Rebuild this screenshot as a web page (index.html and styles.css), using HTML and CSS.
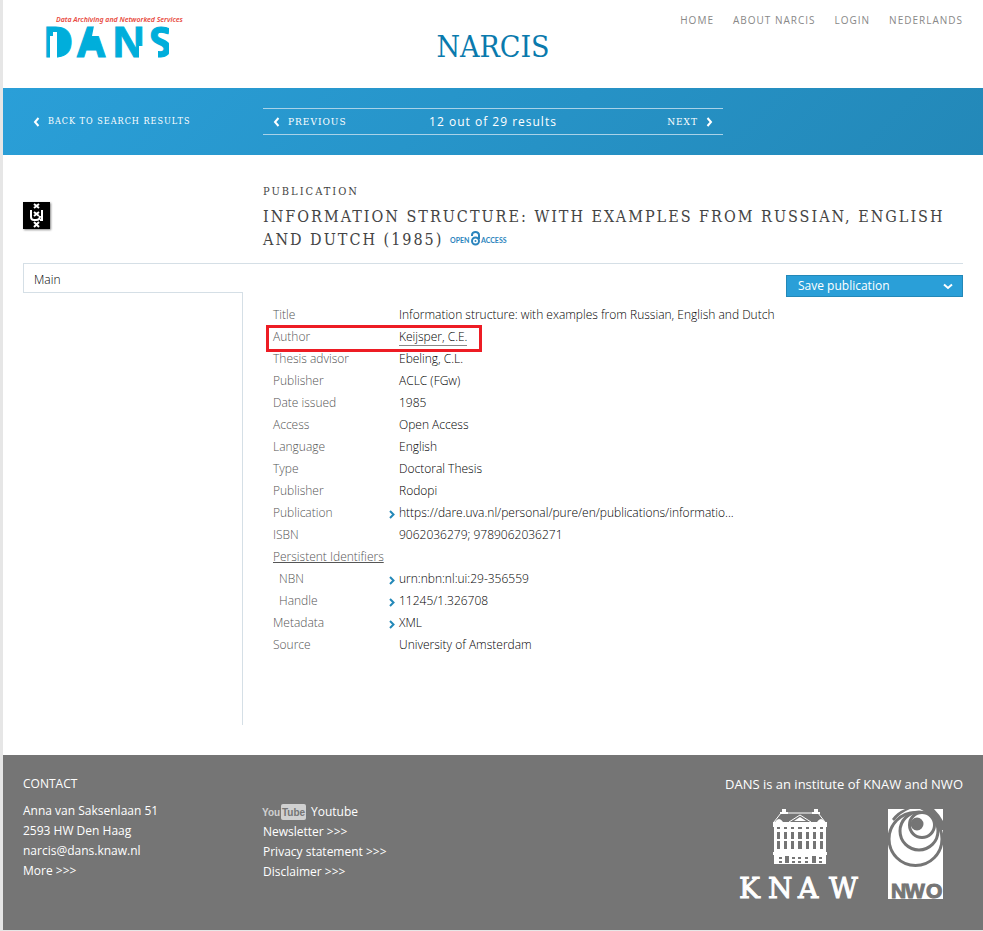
FILE: index.html
```html
<!DOCTYPE html>
<html lang="en">
<head>
<meta charset="utf-8">
<meta name="viewport" content="width=device-width, initial-scale=1">
<title>NARCIS</title>
<link rel="stylesheet" href="styles.css">
</head>
<body>
<header class="site-header">
  <a class="dans" href="#" aria-label="DANS">
    <svg width="146" height="60" viewBox="0 0 146 60">
      <text class="dans-word" x="-2 32 67 104" y="45">DANS</text>
      <path class="dans-fill" d="M8 20H18L22 24V36L18 40H8ZM44 22H48L52 37H41Z"/>
      <path class="dans-cut" d="M5 46V24H8V20H12V46ZM49 14L47 24H58V14ZM94 34H101V47H94ZM103 33H113V47H103ZM124 12H131V48H124Z"/>
      <text class="dans-tagline" x="11" y="10">Data Archiving and Networked Services</text>
    </svg>
  </a>
  <a class="brand" href="#">NARCIS</a>
  <nav class="top-nav">
    <a href="#">HOME</a>
    <a href="#">ABOUT NARCIS</a>
    <a href="#">LOGIN</a>
    <a href="#">NEDERLANDS</a>
  </nav>
</header>

<div class="band">
  <a class="back" href="#"><svg class="chev" width="7" height="10" viewBox="0 0 7 10"><path d="M5.500 1L2 5L5.500 9"/></svg>BACK TO SEARCH RESULTS</a>
  <nav class="pager">
    <a href="#"><svg class="chev" width="7" height="10" viewBox="0 0 7 10"><path d="M5.500 1L2 5L5.500 9"/></svg>PREVIOUS</a>
    <span class="count">12 out of 29 results</span>
    <a class="next" href="#">NEXT<svg class="chev" width="7" height="10" viewBox="0 0 7 10"><path d="M1.500 1L5 5L1.500 9"/></svg></a>
  </nav>
</div>

<main>
  <section class="heading">
    <svg class="uva" width="27" height="27" viewBox="0 0 27 27">
      <rect width="27" height="27"/>
      <path d="M11 2L16 6M16 2L11 6M11 10L16 14M16 10L11 14M11 20L16 25M16 20L11 25"/>
      <path d="M8 8V15Q8 18 11 18H13Q17 18 17 14M19 8V18H17"/>
    </svg>
    <div>
      <p class="kind">PUBLICATION</p>
      <h1>INFORMATION STRUCTURE: WITH EXAMPLES FROM RUSSIAN, ENGLISH AND DUTCH (1985)
        <svg class="oa" width="58" height="16" viewBox="0 0 58 16">
          <text x="0" y="12">OPEN</text>
          <text x="31" y="12">ACCESS</text>
          <path d="M22 5V4A3.500 3 0 0 1 29 4V8"/><circle cx="25.500" cy="10" r="3.500"/><circle class="dot" cx="25.500" cy="10" r="1"/>
        </svg>
      </h1>
    </div>
  </section>

  <div class="columns">
    <aside class="side">
      <a class="tab" href="#">Main</a>
      <div class="rail"></div>
    </aside>
    <section class="record">
      <button class="save" type="button" aria-haspopup="menu">Save publication
        <svg width="10" height="7" viewBox="0 0 10 7"><path d="M1 1.500L5 5L9 1.500"/></svg>
      </button>
      <table>
        <tr><th scope="row">Title</th><td>Information structure: with examples from Russian, English and Dutch</td></tr>
        <tr class="marked"><th scope="row">Author</th><td><a class="person" href="#">Keijsper, C.E.</a></td></tr>
        <tr><th scope="row">Thesis advisor</th><td>Ebeling, C.L.</td></tr>
        <tr><th scope="row">Publisher</th><td>ACLC (FGw)</td></tr>
        <tr><th scope="row">Date issued</th><td>1985</td></tr>
        <tr><th scope="row">Access</th><td>Open Access</td></tr>
        <tr><th scope="row">Language</th><td>English</td></tr>
        <tr><th scope="row">Type</th><td>Doctoral Thesis</td></tr>
        <tr><th scope="row">Publisher</th><td>Rodopi</td></tr>
        <tr><th scope="row">Publication</th><td><a class="ext" href="#"><svg width="6" height="9" viewBox="0 0 6 9"><path d="M1 1L4.500 4.500L1 8"/></svg>https://dare.uva.nl/personal/pure/en/publications/informatio...</a></td></tr>
        <tr><th scope="row">ISBN</th><td>9062036279; 9789062036271</td></tr>
        <tr><th scope="row"><span class="group">Persistent Identifiers</span></th><td></td></tr>
        <tr><th class="sub" scope="row">NBN</th><td><a class="ext" href="#"><svg width="6" height="9" viewBox="0 0 6 9"><path d="M1 1L4.500 4.500L1 8"/></svg>urn:nbn:nl:ui:29-356559</a></td></tr>
        <tr><th class="sub" scope="row">Handle</th><td><a class="ext" href="#"><svg width="6" height="9" viewBox="0 0 6 9"><path d="M1 1L4.500 4.500L1 8"/></svg>11245/1.326708</a></td></tr>
        <tr><th scope="row">Metadata</th><td><a class="ext" href="#"><svg width="6" height="9" viewBox="0 0 6 9"><path d="M1 1L4.500 4.500L1 8"/></svg>XML</a></td></tr>
        <tr><th scope="row">Source</th><td>University of Amsterdam</td></tr>
      </table>
    </section>
  </div>
</main>

<footer>
  <div>
    <h2>CONTACT</h2>
    <ul>
      <li>Anna van Saksenlaan 51</li>
      <li>2593 HW Den Haag</li>
      <li><a href="#">narcis@dans.knaw.nl</a></li>
      <li><a href="#">More &gt;&gt;&gt;</a></li>
    </ul>
  </div>
  <ul class="links">
    <li><a class="yt" href="#"><svg width="43" height="18" viewBox="0 0 43 18"><rect x="18" y="1" width="25" height="16" rx="2"/><text x="-1" y="13">You</text><text class="tube" x="19" y="13">Tube</text></svg>Youtube</a></li>
    <li><a href="#">Newsletter &gt;&gt;&gt;</a></li>
    <li><a href="#">Privacy statement &gt;&gt;&gt;</a></li>
    <li><a href="#">Disclaimer &gt;&gt;&gt;</a></li>
  </ul>
  <div class="institute">
    <p>DANS is an institute of KNAW and NWO</p>
    <div class="logos">
      <a href="#" aria-label="KNAW">
        <svg width="122" height="91" viewBox="0 0 122 91">
          <g class="house">
            <path d="M35 13L42 4H79L86 13" class="line"/>
            <path d="M43 0H47V3H49V5H41V3H43ZM75 0H79V3H81V5H73V3H75Z"/>
            <path d="M50 13L61 6L72 13" class="line"/>
            <path d="M55 12L61 8L67 12ZM36 13Q40 7 44 13ZM78 13Q82 7 86 13Z"/>
            <path d="M34 13H88V18H34ZM34 43H88V46H34ZM35 46H87V55H35Z"/>
            <path d="M35 18H38V43H35ZM41 18H45V43H41ZM48 18H52V43H48ZM55 18H59V43H55ZM63 18H67V43H63ZM70 18H74V43H70ZM77 18H81V43H77ZM84 18H87V43H84Z"/>
            <path d="M36 20H86V23H36ZM36 30H86V32H36ZM36 40H86V43H36Z"/>
          </g>
          <path class="holes" d="M40 48H43V50H40ZM40 52H43V54H40ZM46 47H50V54H46ZM53 48H56V50H53ZM53 52H56V54H53ZM59 48H62V50H59ZM59 52H62V54H59ZM66 48H69V50H66ZM66 52H69V54H66ZM73 47H77V54H73ZM80 48H83V50H80ZM80 52H83V54H80Z"/>
          <text class="knaw" x="0 29 59 90" y="89">KNAW</text>
        </svg>
      </a>
      <a class="nwo-logo" href="#" aria-label="NWO">
        <svg width="55" height="90" viewBox="0 0 55 90">
          <defs><clipPath id="frame"><rect width="55" height="70"/></clipPath></defs>
          <rect class="white" width="55" height="90"/>
          <g class="rings" clip-path="url(#frame)">
            <circle cx="27.500" cy="30" r="26.500"/>
            <path class="holes" d="M4 10Q9 3 17 0H22Q12 4 6 12ZM32 0H46Q52 6 55 12V21H49Q48 8 32 0Z"/>
            <circle cx="31" cy="22" r="19"/>
            <circle cx="34" cy="16" r="12.500"/>
            <circle class="holes" cx="29" cy="15" r="5"/>
          </g>
          <text class="nwo" x="3 17 38" y="89">NWO</text>
        </svg>
      </a>
    </div>
  </div>
</footer>
</body>
</html>
```
FILE: styles.css
```css
* {
  box-sizing: border-box;
}

body {
  margin: 0;
  border-left: 3px solid #e6e6e6;
  border-bottom: 1px solid #e6e6e6;
  background: #fff;
  color: #000;
  font: 300 12px/22px "Open Sans", sans-serif;
}

a {
  color: inherit;
  text-decoration: none;
}

svg {
  overflow: visible;
}

h1, h2, p, ul {
  margin: 0;
  padding: 0;
  font-weight: inherit;
}

ul {
  list-style: none;
}

.site-header {
  display: grid;
  grid-template-columns: 1fr auto 1fr;
  align-items: start;
  height: 88px;
  padding: 12px 20px 0;
}

.dans {
  padding-left: 22px;
}

.dans svg {
  display: block;
}

.dans-tagline {
  fill: #e8483c;
  font: italic 600 7px "Noto Sans", sans-serif;
}

.dans-word,
.dans-fill {
  fill: #00aedb;
}

.dans-word {
  stroke: #00aedb;
  stroke-width: 1;
  font: 700 41px "Open Sans", sans-serif;
}

.dans-cut {
  fill: #fff;
}

.brand {
  padding-top: 15px;
  color: #0a7aad;
  font: 30px/40px "DejaVu Serif Condensed", "DejaVu Serif", serif;
}

.top-nav {
  display: flex;
  justify-content: flex-end;
  gap: 19px;
  color: #888;
  font-size: 10px;
  font-weight: 400;
  line-height: 16px;
  letter-spacing: 1px;
  white-space: nowrap;
}

.band {
  display: grid;
  grid-template-columns: 220px minmax(0, 460px);
  gap: 20px;
  align-items: center;
  padding: 20px;
  background: linear-gradient(135deg, #2a9fd8, #2388b8);
  color: #fff;
  font: 10px/25px "DejaVu Serif Condensed", "DejaVu Serif", serif;
  letter-spacing: 1px;
}

.band a {
  display: flex;
  align-items: center;
  gap: 8px;
}

.back {
  padding-left: 10px;
  font-size: 9px;
}

.pager {
  display: grid;
  grid-template-columns: 1fr auto 1fr;
  padding: 0 10px;
  border: solid #a9d2e8;
  border-width: 1px 0;
}

.next {
  justify-content: flex-end;
}

.count {
  font: 12px/25px "Open Sans", sans-serif;
}

.chev path {
  fill: none;
  stroke: #fff;
  stroke-width: 2;
}

main {
  padding: 0 20px 30px;
}

.heading {
  display: grid;
  grid-template-columns: 220px 1fr;
  gap: 20px;
  min-height: 109px;
  padding: 26px 0 10px;
  border-bottom: 1px solid #d5dfe6;
}

.uva {
  margin-top: 21px;
  box-shadow: 1px 1px 2px #888;
}

.uva path {
  fill: none;
  stroke: #fff;
  stroke-width: 2;
}

.kind,
h1 {
  color: #444;
  font-family: "DejaVu Serif Condensed", "DejaVu Serif", serif;
  font-weight: 400;
}

.kind {
  margin-bottom: 2px;
  font-size: 11px;
  letter-spacing: 2px;
}

h1 {
  font-size: 16px;
  line-height: 23px;
  letter-spacing: 2px;
}

.oa {
  height: 16px;
  vertical-align: -2px;
  letter-spacing: 0;
}

.oa text {
  fill: #2b84bd;
  font: 700 7px Lato, sans-serif;
}

.oa path,
.oa circle {
  fill: none;
  stroke: #2b84bd;
  stroke-width: 2;
}

.oa .dot {
  fill: #2b84bd;
  stroke: none;
}

.columns {
  display: grid;
  grid-template-columns: 220px 1fr;
  gap: 20px;
}

.side {
  display: flex;
  flex-direction: column;
}

.tab {
  padding: 5px 10px 1px;
  border: solid #d5dfe6;
  border-width: 0 0 1px 1px;
}

.rail {
  flex: 1;
  border-right: 1px solid #d5dfe6;
}

.record {
  display: flex;
  flex-direction: column;
  align-items: flex-start;
  gap: 7px;
  padding: 11px 0 69px;
}

.save {
  display: flex;
  justify-content: space-between;
  align-items: center;
  align-self: flex-end;
  width: 177px;
  height: 22px;
  padding: 0 9px 0 11px;
  border: 1px solid #2388b8;
  background: #2a9fd8;
  color: #fff;
  font: inherit;
  font-weight: 400;
}

.save path {
  fill: none;
  stroke: #fff;
  stroke-width: 2;
}

table {
  margin-left: 10px;
  border-collapse: collapse;
}

th,
td {
  height: 22px;
  padding: 0;
  text-align: left;
  font-weight: inherit;
}

th {
  width: 126px;
  color: #555;
}

.sub {
  padding-left: 6px;
}

.group {
  text-decoration: underline;
}

.person {
  display: inline-block;
  border-bottom: 1px solid #888;
  line-height: 16px;
}

.marked {
  position: relative;
}

.marked th::after {
  content: "";
  position: absolute;
  box-sizing: border-box;
  top: -1px;
  left: -7px;
  width: 216px;
  height: 27px;
  border: 3px solid #ed1c24;
}

.ext svg {
  margin: 0 4px 0 -10px;
  vertical-align: -2px;
}

.ext path {
  fill: none;
  stroke: #2388b8;
  stroke-width: 2;
}

footer {
  display: grid;
  grid-template-columns: 220px 1fr auto;
  gap: 20px;
  min-height: 175px;
  padding: 19px 20px 18px;
  background: #757575;
  color: #fff;
  font-weight: 400;
  line-height: 20px;
}

h2 {
  margin-bottom: 7px;
  font-size: 12px;
}

.links {
  padding-top: 28px;
}

.yt {
  display: flex;
  align-items: center;
  gap: 5px;
}

.yt rect {
  fill: #d0d0d0;
}

.yt text {
  fill: #d0d0d0;
  font: 700 10px "Liberation Sans", sans-serif;
}

.yt .tube {
  fill: #757575;
}

.institute p {
  font-size: 13px;
  line-height: 20px;
}

.logos {
  display: flex;
  justify-content: flex-end;
  gap: 27px;
  padding: 15px 20px 0 0;
}

.logos svg {
  display: block;
}

.house,
.white {
  fill: #fff;
}

.line {
  fill: none;
  stroke: #fff;
  stroke-width: 1;
}

.rings circle {
  fill: #fff;
  stroke: #757575;
  stroke-width: 3;
}

.holes,
.rings .holes {
  fill: #757575;
}

.knaw {
  fill: #fff;
  stroke: #fff;
  stroke-width: 1;
  font: 28px "DejaVu Serif", serif;
}

.nwo {
  fill: #757575;
  stroke: #757575;
  stroke-width: 1;
  font: 700 21px "Liberation Sans", sans-serif;
}
```
